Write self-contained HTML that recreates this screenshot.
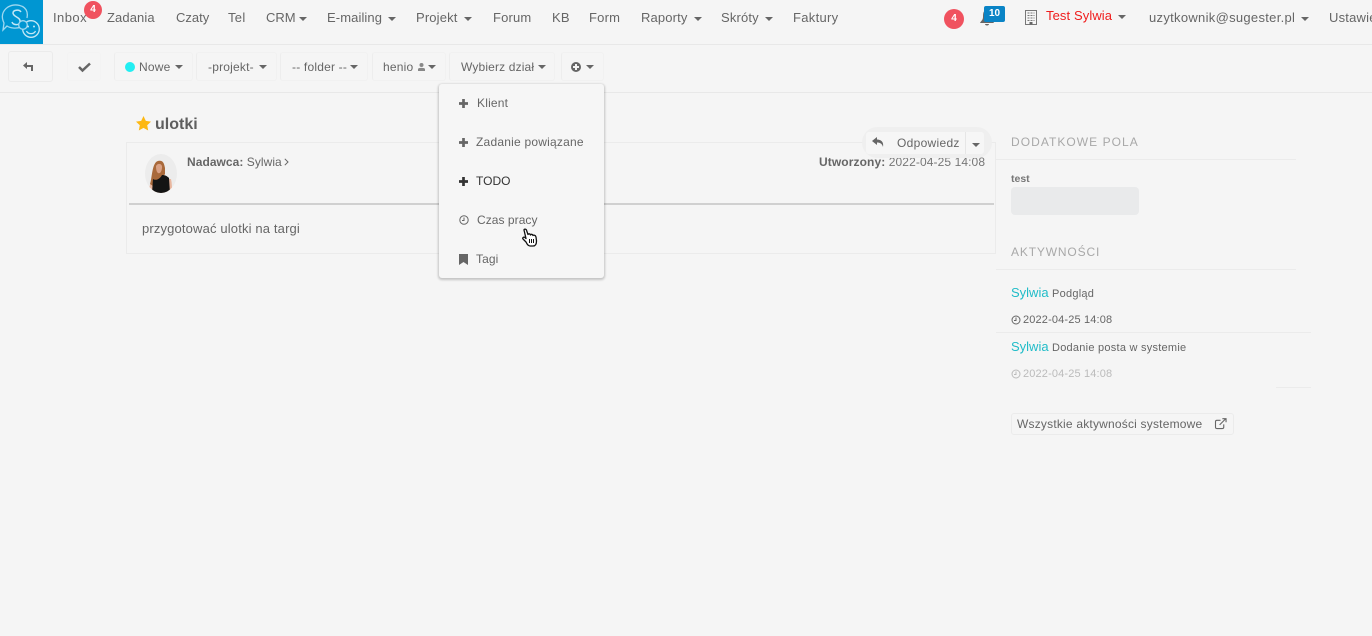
<!DOCTYPE html>
<html lang="pl"><head><meta charset="utf-8"><title>ulotki</title>
<style>
html,body{margin:0;padding:0;width:1372px;height:636px;overflow:hidden;background:#f5f5f5}
body{position:relative;font-family:"Liberation Sans",sans-serif;font-size:13px;color:#666}
.t{position:absolute;white-space:nowrap;line-height:18px;height:18px}
.b{position:absolute}
.c{position:absolute;width:0;height:0;margin-left:-.5px;border-left:4px solid transparent;border-right:4px solid transparent;border-top:4px solid #666}
.tb{position:absolute;top:52px;height:29px;border:1px solid #f1f1f1;border-left-color:#ededed;border-radius:3px;box-sizing:border-box}
svg{position:absolute;overflow:visible}
</style></head><body>
<div class="b" style="left:0;top:44px;width:1372px;height:1px;background:#e8e8e8"></div>
<div class="b" style="left:0;top:92px;width:1372px;height:1px;background:#e8e8e8"></div>

<div class="b" style="left:0;top:0;width:43px;height:44px;background:#0096d2"></div>
<svg style="left:0;top:0" width="43" height="44" viewBox="0 0 43 44" fill="none" stroke="#9fd8f0" stroke-width="1.300">
<path d="M21 27C16 29 10 28 7 26L3 30 4 23C1 17 2 11 8 7 15 3 25 5 27 12 27.500 14 27.500 16 27 18"/>
<path d="M21 12C19 9 13 10 13 13 13 17 21 17 20 22 19 26 13 25 12 22" stroke="#c4e8f6" stroke-width="1.500"/>
<circle cx="31" cy="29" r="8.300" stroke="#c4e8f6"/><circle cx="23" cy="25" r="4.300" fill="#0096d2"/>
<circle cx="28" cy="26.500" r="1" fill="#c4e8f6" stroke="none"/><circle cx="34" cy="26.500" r="1" fill="#c4e8f6" stroke="none"/>
<path d="M26.500 31C28 34.500 34 34.500 35.500 31" stroke="#c4e8f6"/>
</svg>

<span class="t" style="left:53px;top:9px;letter-spacing:.45px">Inbox</span>
<div class="b" style="left:84px;top:1px;width:18px;height:18px;border-radius:50%;background:#f0525f;color:#fff;font-weight:bold;font-size:10px;line-height:18px;text-align:center">4</div>
<span class="t" style="left:107px;top:9px;letter-spacing:.1px">Zadania</span>
<span class="t" style="left:176px;top:9px">Czaty</span>
<span class="t" style="left:228px;top:9px;letter-spacing:.3px">Tel</span>
<span class="t" style="left:266px;top:9px">CRM</span><i class="c" style="left:299px;top:17px"></i>
<span class="t" style="left:327px;top:9px;letter-spacing:.1px">E-mailing</span><i class="c" style="left:388px;top:17px"></i>
<span class="t" style="left:416px;top:9px;letter-spacing:.15px">Projekt</span><i class="c" style="left:464px;top:17px"></i>
<span class="t" style="left:493px;top:9px;letter-spacing:.15px">Forum</span>
<span class="t" style="left:552px;top:9px;letter-spacing:.2px">KB</span>
<span class="t" style="left:589px;top:9px;letter-spacing:.2px">Form</span>
<span class="t" style="left:641px;top:9px;letter-spacing:.15px">Raporty</span><i class="c" style="left:694px;top:17px"></i>
<span class="t" style="left:721px;top:9px;letter-spacing:.15px">Skróty</span><i class="c" style="left:765px;top:17px"></i>
<span class="t" style="left:793px;top:9px;letter-spacing:.3px">Faktury</span>

<div class="b" style="left:944px;top:9px;width:20px;height:20px;border-radius:50%;background:#f0525f;color:#fff;font-weight:bold;font-size:10px;line-height:20px;text-align:center">4</div>
<svg style="left:979px;top:9px" width="16" height="17" viewBox="0 0 16 17"><path fill="#666" d="M8 1C4 1 4 5 4 8 4 11 2 12 1 14H15C14 12 12 11 12 8 12 5 12 1 8 1ZM6 15C6 17 10 17 10 15Z"/></svg>
<div class="b" style="left:984px;top:6px;width:21px;height:16px;border-radius:2px;background:#0a84c6;color:#fff;font-weight:bold;font-size:10px;line-height:16px;text-align:center">10</div>
<svg style="left:1025px;top:10px" width="12" height="15" viewBox="0 0 12 15" fill="none" stroke="#777"><rect x=".5" y=".5" width="11" height="14"/><path d="M2.500 3H9.500M2.500 5.500H9.500M2.500 8H9.500M2.500 10.500H9.500" stroke-dasharray="2 1"/><rect x="4.500" y="12" width="3" height="2.500" fill="#666" stroke="none"/></svg>
<span class="t" style="left:1046px;top:7px;color:#f01c1c;letter-spacing:.1px">Test Sylwia</span><i class="c" style="left:1118px;top:15px"></i>
<span class="t" style="left:1149px;top:9px;letter-spacing:.3px">uzytkownik@sugester.pl</span><i class="c" style="left:1301px;top:17px"></i>
<span class="t" style="left:1329px;top:9px;letter-spacing:.2px">Ustawienia</span>

<div class="tb" style="left:8px;top:51px;height:31px;width:45px;border-color:#ebebeb"></div>
<svg style="left:23px;top:62px" width="11" height="9" viewBox="0 0 11 9"><path fill="#666" d="M4 0 0 3.500 4 7V5H8V9H10V3H4Z"/></svg>
<div class="tb" style="left:67px;width:34px;border-color:#f3f3f3"></div>
<svg style="left:78px;top:62px" width="13" height="10" viewBox="0 0 13 10"><path fill="none" stroke="#666" stroke-width="2.500" d="M1 5 4.500 8.500 12 1.500"/></svg>
<div class="tb" style="left:114px;width:79px"></div>
<div class="b" style="left:125px;top:62px;width:10px;height:10px;border-radius:50%;background:#22eef2"></div>
<span class="t" style="left:139px;top:58px;font-size:12px;letter-spacing:.2px">Nowe</span><i class="c" style="left:175px;top:65px"></i>
<div class="tb" style="left:196px;width:81px"></div>
<span class="t" style="left:208px;top:58px;font-size:12px;letter-spacing:.2px">-projekt-</span><i class="c" style="left:259px;top:65px"></i>
<div class="tb" style="left:280px;width:88px"></div>
<span class="t" style="left:292px;top:58px;font-size:12px;letter-spacing:.2px">-- folder --</span><i class="c" style="left:350px;top:65px"></i>
<div class="tb" style="left:372px;width:74px"></div>
<span class="t" style="left:383px;top:58px;font-size:12px;letter-spacing:.2px">henio</span>
<svg style="left:418px;top:63px" width="7" height="8" viewBox="0 0 7 8"><circle cx="3.500" cy="2" r="2" fill="#888"/><path fill="#888" d="M0 8V6C0 4.500 7 4.500 7 6V8Z"/></svg><i class="c" style="left:428px;top:65px"></i>
<div class="tb" style="left:449px;width:106px"></div>
<span class="t" style="left:461px;top:58px;font-size:12px;letter-spacing:.15px">Wybierz dział</span><i class="c" style="left:538px;top:65px"></i>
<div class="tb" style="left:561px;width:43px"></div>
<div class="b" style="left:571px;top:62px;width:10px;height:10px;border-radius:50%;background:#666"></div>
<div class="b" style="left:573px;top:66px;width:6px;height:2px;background:#f5f5f5"></div>
<div class="b" style="left:575px;top:64px;width:2px;height:6px;background:#f5f5f5"></div>
<i class="c" style="left:586px;top:65px"></i>

<svg style="left:136px;top:116px" width="15" height="15" viewBox="0 0 15 15"><path fill="#fdb813" d="M7.500 0 9.800 4.900 15 5.600 11.200 9.200 12.200 14.500 7.500 11.900 2.800 14.500 3.800 9.200 0 5.600 5.200 4.900Z"/></svg>
<span class="t" style="left:155px;top:116px;font-size:16px;font-weight:bold;color:#5f5f5f">ulotki</span>

<div class="b" style="left:126px;top:142px;width:870px;height:112px;border:1px solid #ebebeb;box-sizing:border-box"></div>
<div class="b" style="left:129px;top:203px;width:865px;height:2px;background:#d0d0d0"></div>
<svg style="left:145px;top:154px" width="32" height="39" viewBox="0 0 32 39">
<defs><clipPath id="a"><ellipse cx="16" cy="19.500" rx="16" ry="19.500"/></clipPath></defs>
<g clip-path="url(#a)"><rect width="32" height="39" fill="#ececec"/>
<path fill="#e9b79f" d="M4 39C4 31 6 26 10 25L26 25C27 29 27 34 27 39Z"/>
<path fill="#a9693a" d="M5 30C7 25 7 8 13 7 18 6 19 9 20 14L20 20 13 31 8 32Z"/>
<path fill="#d9a185" d="M11 12C13 8 18 10 17 14 16.500 18 15 20 13 19 11.500 18 11 15 11 12Z"/>
<path fill="#141414" d="M7 39 8 25C11 27 15 25 17 21 20 21 22 22 24 24L25 39Z"/></g></svg>
<span class="t" style="left:187px;top:153px;font-size:12px;letter-spacing:.05px"><b style="color:#666">Nadawca:</b> Sylwia</span>
<svg style="left:284px;top:158px" width="5" height="8" viewBox="0 0 5 8"><path fill="none" stroke="#666" d="M.8.800 4 4 .8 7.200"/></svg>
<span class="t" style="left:819px;top:153px;font-size:12px;letter-spacing:.1px;color:#777"><b style="color:#666">Utworzony:</b> 2022-04-25 14:08</span>
<span class="t" style="left:142px;top:220px;letter-spacing:.15px">przygotować ulotki na targi</span>

<div class="b" style="left:862px;top:127px;width:130px;height:31px;border-radius:16px;background:#efefef"></div>
<div class="b" style="left:866px;top:132px;width:118px;height:22px;border-radius:3px;background:#f6f6f6"></div>
<div class="b" style="left:965px;top:132px;width:1px;height:22px;background:#e6e6e6"></div>
<svg style="left:872px;top:137px" width="12" height="10" viewBox="0 0 12 10"><path fill="#666" d="M5 0 0 4 5 8V5.500C8 5.500 10 6.500 11 10 12 5 9 2.500 5 2.500Z"/></svg>
<span class="t" style="left:897px;top:134px;font-size:12px;letter-spacing:.3px">Odpowiedz</span><i class="c" style="left:972px;top:143px"></i>

<span class="t" style="left:1011px;top:133px;font-size:12px;letter-spacing:1.05px;color:#a8a8a8">DODATKOWE POLA</span>
<div class="b" style="left:996px;top:159px;width:300px;height:1px;background:#ebebeb"></div>
<span class="t" style="left:1011px;top:170px;font-size:10.500px;font-weight:bold;color:#777">test</span>
<div class="b" style="left:1011px;top:187px;width:128px;height:28px;border-radius:4px;background:#e9eaeb"></div>
<span class="t" style="left:1011px;top:243px;font-size:12px;letter-spacing:.85px;color:#a8a8a8">AKTYWNOŚCI</span>
<div class="b" style="left:996px;top:269px;width:300px;height:1px;background:#ebebeb"></div>

<span class="t" style="left:1011px;top:284px;color:#20bcc8">Sylwia</span>
<span class="t" style="left:1052px;top:285px;font-size:11px;letter-spacing:.25px">Podgląd</span>
<svg style="left:1011px;top:315px" width="10" height="10" viewBox="0 0 10 10" fill="none" stroke="#666"><circle cx="5" cy="5" r="4"/><path d="M5 2.500V5.500H3"/></svg>
<span class="t" style="left:1023px;top:311px;font-size:11px;letter-spacing:.15px">2022-04-25 14:08</span>
<div class="b" style="left:996px;top:332px;width:315px;height:1px;background:#ebebeb"></div>
<span class="t" style="left:1011px;top:338px;color:#20bcc8">Sylwia</span>
<span class="t" style="left:1052px;top:339px;font-size:11px;letter-spacing:.25px">Dodanie posta w systemie</span>
<svg style="left:1011px;top:369px" width="10" height="10" viewBox="0 0 10 10" fill="none" stroke="#bbb"><circle cx="5" cy="5" r="4"/><path d="M5 2.500V5.500H3"/></svg>
<span class="t" style="left:1023px;top:365px;font-size:11px;letter-spacing:.15px;color:#bbb">2022-04-25 14:08</span>
<div class="b" style="left:1276px;top:387px;width:35px;height:1px;background:#ebebeb"></div>

<div class="b" style="left:1011px;top:413px;width:223px;height:22px;border:1px solid #ebebeb;border-radius:3px;box-sizing:border-box"></div>
<span class="t" style="left:1017px;top:415px;font-size:12px;letter-spacing:.2px">Wszystkie aktywności systemowe</span>
<svg style="left:1215px;top:418px" width="12" height="11" viewBox="0 0 13 12" fill="none" stroke="#666" stroke-width="1.200"><path d="M9.500 7V10C9.500 11 9 11.500 8 11.500H2C1 11.500.5 11 .5 10V4C.5 3 1 2.500 2 2.500H6"/><path d="M5 7.500 11.500 1M8 .7H12V4.700"/></svg>

<div class="b" style="left:439px;top:84px;width:165px;height:194px;background:#f6f6f6;border-radius:3px;box-shadow:0 1px 2px 1px rgba(0,0,0,.2)"></div>
<svg style="left:459px;top:99px" width="9" height="9" viewBox="0 0 10 10"><path fill="#666" d="M3.500 0H6.500V3.500H10V6.500H6.500V10H3.500V6.500H0V3.500H3.500Z"/></svg>
<span class="t" style="left:477px;top:94px;font-size:12px;letter-spacing:.2px">Klient</span>
<svg style="left:459px;top:138px" width="9" height="9" viewBox="0 0 10 10"><path fill="#666" d="M3.500 0H6.500V3.500H10V6.500H6.500V10H3.500V6.500H0V3.500H3.500Z"/></svg>
<span class="t" style="left:476px;top:133px;font-size:12px;letter-spacing:.22px">Zadanie powiązane</span>
<svg style="left:459px;top:177px" width="9" height="9" viewBox="0 0 10 10"><path fill="#333" d="M3.500 0H6.500V3.500H10V6.500H6.500V10H3.500V6.500H0V3.500H3.500Z"/></svg>
<span class="t" style="left:476px;top:172px;font-size:12px;color:#333">TODO</span>
<svg style="left:459px;top:215px" width="10" height="10" viewBox="0 0 10 10" fill="none" stroke="#666"><circle cx="5" cy="5" r="4.200"/><path d="M5 2.500V5.500H3"/></svg>
<span class="t" style="left:477px;top:211px;font-size:12px;letter-spacing:.05px">Czas pracy</span>
<svg style="left:459px;top:254px" width="9" height="11" viewBox="0 0 9 11"><path fill="#666" d="M0 0H9V11L4.500 8 0 11Z"/></svg>
<span class="t" style="left:476px;top:250px;font-size:12px;letter-spacing:.1px">Tagi</span>

<svg style="left:522px;top:228px" width="16" height="19" viewBox="0 0 16 19"><path fill="#fff" stroke="#111" stroke-width="1.300" stroke-linejoin="round" d="M2 2C2 .8 4 .8 4.400 2L6 6.500C6.500 5.500 8 5.500 8.500 7 9 6 10.500 6 11 7.500 11.500 6.800 13.500 7 14 9L14.500 13C14.500 16 13.500 18 11 18H8C6 18 5 16 4 14L1 11C.2 10 1.500 8.500 3 9.500L4 10.500Z"/><path stroke="#111" d="M7.500 11V15M9.500 11V15M11.500 11V15"/></svg>
</body></html>
